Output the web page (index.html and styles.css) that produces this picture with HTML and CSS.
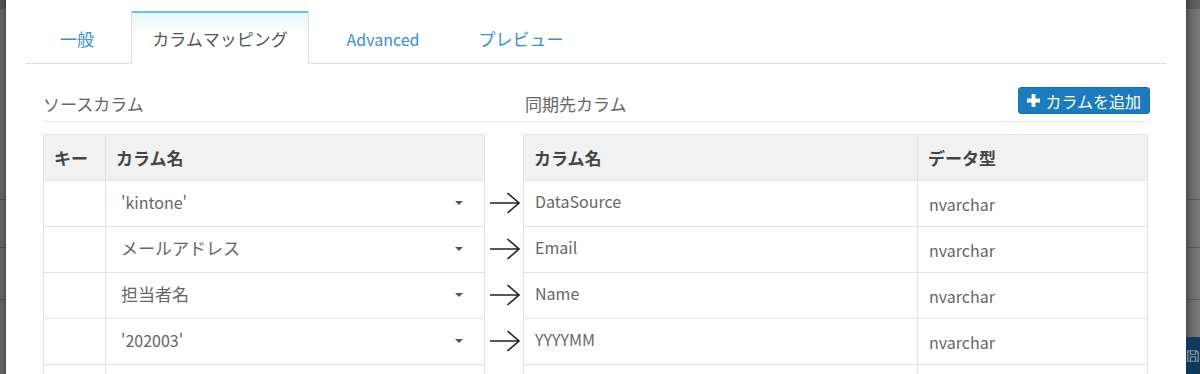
FILE: index.html
```html
<!DOCTYPE html>
<html lang="ja">
<head>
<meta charset="utf-8">
<title>カラムマッピング</title>
<link rel="stylesheet" href="styles.css">
</head>
<body>
<div class="bd bd-left">
  <div class="bd-top"></div>
  <div class="bd-seg bd-seg-a"></div>
  <div class="bd-seg bd-seg-b"></div>
  <div class="bd-seg bd-seg-c"></div>
  <div class="bd-rest"></div>
</div>

<div class="modal">
  <ul class="tabs">
    <li class="tab tab-general">一般</li>
    <li class="tab tab-mapping active">カラムマッピング</li>
    <li class="tab tab-advanced">Advanced</li>
    <li class="tab tab-preview">プレビュー</li>
  </ul>

  <div class="panel">
    <div class="heads">
      <h3 class="head">ソースカラム</h3>
      <h3 class="head head-dst">同期先カラム</h3>
      <button class="add-btn" type="button">
        <svg class="plus" width="13" height="13" viewBox="0 0 13 13"><path d="M4.6 0h3.8v4.6H13v3.8H8.4V13H4.6V8.4H0V4.6h4.6z" fill="#fff"/></svg>
        <span>カラムを追加</span>
      </button>
    </div>

    <div class="mapping">
      <table class="grid src">
        <thead>
          <tr><th class="c-key">キー</th><th class="c-name">カラム名</th></tr>
        </thead>
        <tbody>
          <tr><td class="c-key"></td><td class="c-name"><div class="select"><span>'kintone'</span><i class="caret"></i></div></td></tr>
          <tr><td class="c-key"></td><td class="c-name"><div class="select"><span class="ja">メールアドレス</span><i class="caret"></i></div></td></tr>
          <tr><td class="c-key"></td><td class="c-name"><div class="select"><span class="ja">担当者名</span><i class="caret"></i></div></td></tr>
          <tr><td class="c-key"></td><td class="c-name"><div class="select"><span>'202003'</span><i class="caret"></i></div></td></tr>
          <tr><td class="c-key"></td><td class="c-name"></td></tr>
        </tbody>
      </table>

      <div class="arrows">
        <div class="arrow"><svg width="30" height="22" viewBox="0 0 30 22"><path d="M0 11H29M17.5 1L29 11L17.5 21" fill="none" stroke="#222" stroke-width="1.6"/></svg></div>
        <div class="arrow"><svg width="30" height="22" viewBox="0 0 30 22"><path d="M0 11H29M17.5 1L29 11L17.5 21" fill="none" stroke="#222" stroke-width="1.6"/></svg></div>
        <div class="arrow"><svg width="30" height="22" viewBox="0 0 30 22"><path d="M0 11H29M17.5 1L29 11L17.5 21" fill="none" stroke="#222" stroke-width="1.6"/></svg></div>
        <div class="arrow"><svg width="30" height="22" viewBox="0 0 30 22"><path d="M0 11H29M17.5 1L29 11L17.5 21" fill="none" stroke="#222" stroke-width="1.6"/></svg></div>
      </div>

      <table class="grid dst">
        <thead>
          <tr><th class="c-col">カラム名</th><th class="c-type">データ型</th></tr>
        </thead>
        <tbody>
          <tr><td class="c-col">DataSource</td><td class="c-type">nvarchar</td></tr>
          <tr><td class="c-col">Email</td><td class="c-type">nvarchar</td></tr>
          <tr><td class="c-col">Name</td><td class="c-type">nvarchar</td></tr>
          <tr><td class="c-col">YYYYMM</td><td class="c-type">nvarchar</td></tr>
          <tr><td class="c-col"></td><td class="c-type"></td></tr>
        </tbody>
      </table>
    </div>
  </div>
</div>

<div class="bd bd-right">
  <div class="bd-top"></div>
  <div class="bd-seg bd-seg-a"></div>
  <div class="bd-seg bd-seg-b"></div>
  <div class="bd-seg bd-seg-c"></div>
  <div class="bd-rest"></div>
  <div class="bd-footer">
    <svg width="16" height="16" viewBox="0 0 16 16"><path d="M2 2h10l2 2v10H2z M5 2v4h6V2 M5 14v-5h6v5" fill="none" stroke="#7f98ab" stroke-width="1.4"/></svg>
  </div>
</div>
</body>
</html>
```

FILE: styles.css
```css
* { box-sizing: border-box; }

html, body {
  margin: 0;
  padding: 0;
}

body {
  display: flex;
  height: 374px;
  overflow: hidden;
  background: #5e5e5e;
  font-family: "Noto Sans CJK JP", "Noto Sans", sans-serif;
  color: #666;
}

/* backdrop strips */
.bd {
  display: flex;
  flex-direction: column;
  flex: none;
  height: 374px;
}
.bd-left {
  width: 6px;
  background: linear-gradient(to right, #656565 0, #5a5a5a 70%, #4a4a4a 100%);
}
.bd-right {
  width: 14px;
  background: linear-gradient(to right, #4e4e4e 0, #6a6a6a 40%, #7a7a7a 100%);
}
.bd-top {
  height: 9px;
  background: rgba(0, 0, 0, 0.18);
}
.bd-seg { border-bottom: 1px solid rgba(0, 0, 0, 0.22); }
.bd-seg-a { height: 191px; }
.bd-seg-b { height: 48px; }
.bd-seg-c { height: 52px; }
.bd-rest { flex: 1; }
.bd-footer {
  height: 37px;
  flex: none;
  background: #0f3a5a;
  display: flex;
  align-items: center;
}

/* modal */
.modal {
  width: 1180px;
  flex: none;
  background: #fff;
  padding: 0 20px;
}

.tabs {
  list-style: none;
  margin: 11px 0 0;
  padding: 0;
  display: flex;
  border-bottom: 1px solid #dedede;
  height: 53px;
}
.tab {
  height: 53px;
  margin-bottom: -1px;
  padding-top: 14px;
  line-height: 24px;
  font-size: 17px;
  text-align: center;
  color: #3a8fcf;
  border: 1px solid transparent;
  border-top-width: 2px;
}
.tab-general { width: 105px; padding-right: 3px; }
.tab-mapping { width: 178px; }
.tab-advanced { width: 148px; font-size: 16px; }
.tab-preview { width: 128px; }
.tab.active {
  color: #555;
  border-color: #dedede;
  border-top-color: #6cc4f2;
  border-bottom-color: #fff;
  background: linear-gradient(to bottom, #e9f5fc 0, #ffffff 45%, #ffffff 100%);
}

/* panel */
.panel {
  padding: 0 18px 0 17px;
}

.heads {
  display: grid;
  grid-template-columns: 482px 1fr auto;
  align-items: end;
  padding-top: 23px;
  padding-bottom: 5px;
  border-bottom: 1px solid #e8e8e8;
  margin-right: 2px;
}
.head {
  margin: 0;
  font-size: 17px;
  font-weight: 400;
  line-height: 24px;
  color: #666;
}
.add-btn {
  display: flex;
  align-items: center;
  gap: 5px;
  height: 27px;
  margin: 0 -4px 2px 0;
  padding: 0 8px 0 8px;
  background: #1c7bbf;
  border: 1px solid #176ea9;
  border-radius: 3px;
  color: #fff;
  font-family: inherit;
  font-size: 16px;
  line-height: 20px;
}
.plus { flex: none; }

/* mapping */
.mapping {
  display: grid;
  grid-template-columns: 442px 38px 625px;
  margin-top: 12px;
}

.grid {
  border-collapse: separate;
  border-spacing: 0;
  border-top: 1px solid #e3e3e3;
  border-left: 1px solid #e3e3e3;
  table-layout: fixed;
  width: 100%;
}
.grid th,
.grid td {
  height: 46px;
  padding: 0;
  border-right: 1px solid #e3e3e3;
  border-bottom: 1px solid #e3e3e3;
  text-align: left;
  vertical-align: middle;
  white-space: nowrap;
}
.grid th {
  background: #f1f1f1;
  color: #444;
  font-weight: 700;
  font-size: 17px;
  padding-left: 10px;
}
.grid td {
  font-size: 16px;
  color: #666;
}

.src .c-key { width: 62px; }
.dst .c-col { width: 394px; }
.dst td { padding-left: 11px; }
.dst td.c-type { padding-top: 1px; }
.dst td.c-col { padding-bottom: 5px; }

.select {
  display: flex;
  align-items: center;
  justify-content: space-between;
  padding: 0 21px 4px 15px;
  font-size: 16px;
  color: #666;
}
.select .ja { font-size: 17px; }
.caret {
  width: 0;
  height: 0;
  margin-top: 2px;
  border-left: 4.5px solid transparent;
  border-right: 4.5px solid transparent;
  border-top: 4.5px solid #555;
}

.arrows {
  display: flex;
  flex-direction: column;
  padding-top: 46px;
  padding-left: 5px;
}
.arrow {
  height: 46px;
  display: flex;
  align-items: center;
}
.arrow svg { display: block; }
```
